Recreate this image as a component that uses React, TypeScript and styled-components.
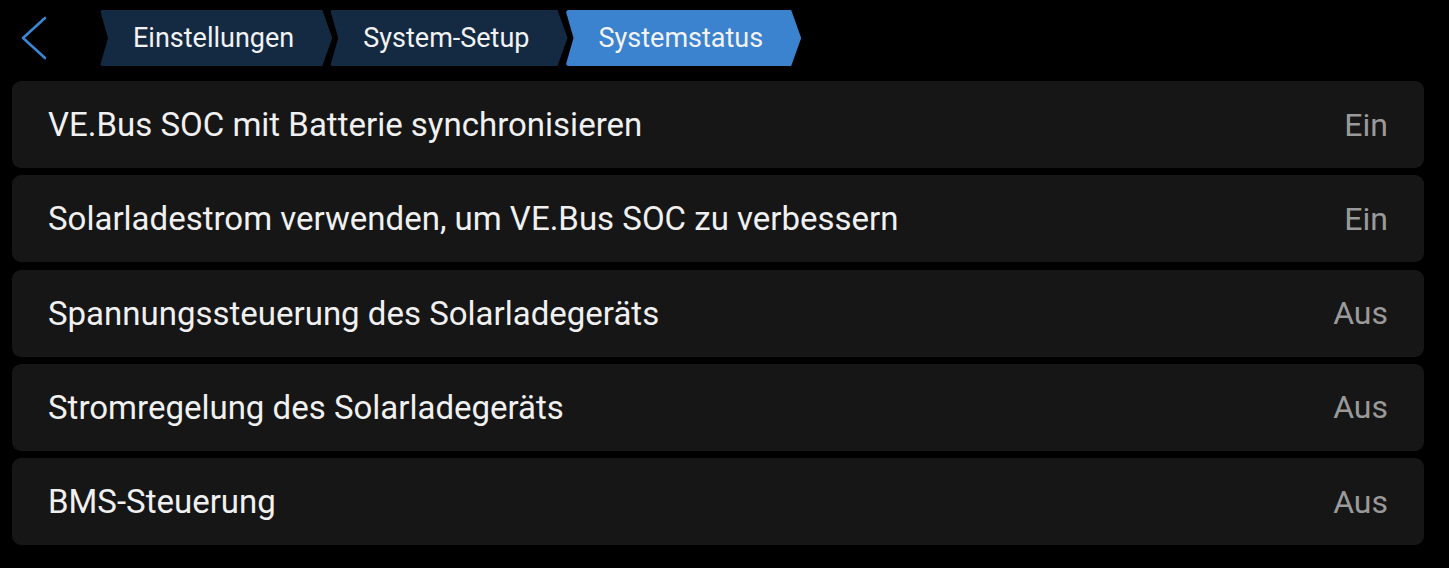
import React from 'react';
import styled, { createGlobalStyle } from 'styled-components';

const GlobalStyle = createGlobalStyle`
  body {
    margin: 0;
    background-color: #000;
    font-family: Roboto, 'Liberation Sans', sans-serif;
  }
`;

const Page = styled.div`
  width: 1449px;
  height: 568px;
  background-color: #000;
  overflow: hidden;
`;

//Header ----------------------------------------
const Header = styled.div`
  height: 56px;
  padding-top: 10px;
  display: flex;
  align-items: center;
`;

const BackButton = styled.button`
  width: 100px;
  height: 56px;
  padding: 0 0 0 20px;
  display: flex;
  align-items: center;
  background: transparent;
  border: none;
  cursor: pointer;
`;

const Crumbs = styled.div`
  display: flex;
  height: 56px;
`;

const Crumb = styled.div<{ $active?: boolean }>`
  height: 56px;
  padding: 0 38px 0 33px;
  margin-right: -2px;
  display: flex;
  align-items: center;
  font-size: 27px;
  color: #f2f2f2;
  background-color: ${p => (p.$active ? '#3b82cf' : '#142a43')};
  clip-path: polygon(0 0, calc(100% - 10px) 0, 100% 50%, calc(100% - 10px) 100%, 0 100%, 8px 50%);
  border-radius: 3px;
`;
//-----------------------------------------------

//List ------------------------------------------
const List = styled.div`
  margin-top: 15px;
  padding: 0 25px 0 12px;
  display: flex;
  flex-direction: column;
  gap: 7.25px;
`;

const Row = styled.div`
  height: 87px;
  padding: 0 36px;
  display: flex;
  justify-content: space-between;
  align-items: center;
  background-color: #161616;
  border-radius: 9px;
`;

const Label = styled.span`
  font-size: 33px;
  color: #f0f0f0;
`;

const Value = styled.span`
  font-size: 32px;
  color: #9a9a9a;
`;
//-----------------------------------------------

const settings = [
  { label: 'VE.Bus SOC mit Batterie synchronisieren', value: 'Ein' },
  { label: 'Solarladestrom verwenden, um VE.Bus SOC zu verbessern', value: 'Ein' },
  { label: 'Spannungssteuerung des Solarladegeräts', value: 'Aus' },
  { label: 'Stromregelung des Solarladegeräts', value: 'Aus' },
  { label: 'BMS-Steuerung', value: 'Aus' },
];

const App = (): JSX.Element => {
  return (
    <Page>
      <GlobalStyle />
      <Header>
        <BackButton aria-label='back'>
          <svg width='30' height='44' viewBox='0 0 30 44'>
            <polyline
              points='25,2 3,22 25,42'
              fill='none'
              stroke='#3a85d4'
              strokeWidth='2.6'
              strokeLinecap='round'
              strokeLinejoin='round'
            />
          </svg>
        </BackButton>
        <Crumbs>
          <Crumb>Einstellungen</Crumb>
          <Crumb>System-Setup</Crumb>
          <Crumb $active>Systemstatus</Crumb>
        </Crumbs>
      </Header>

      <List>
        {settings.map(s => (
          <Row key={s.label}>
            <Label>{s.label}</Label>
            <Value>{s.value}</Value>
          </Row>
        ))}
      </List>
    </Page>
  );
};

export default App;
